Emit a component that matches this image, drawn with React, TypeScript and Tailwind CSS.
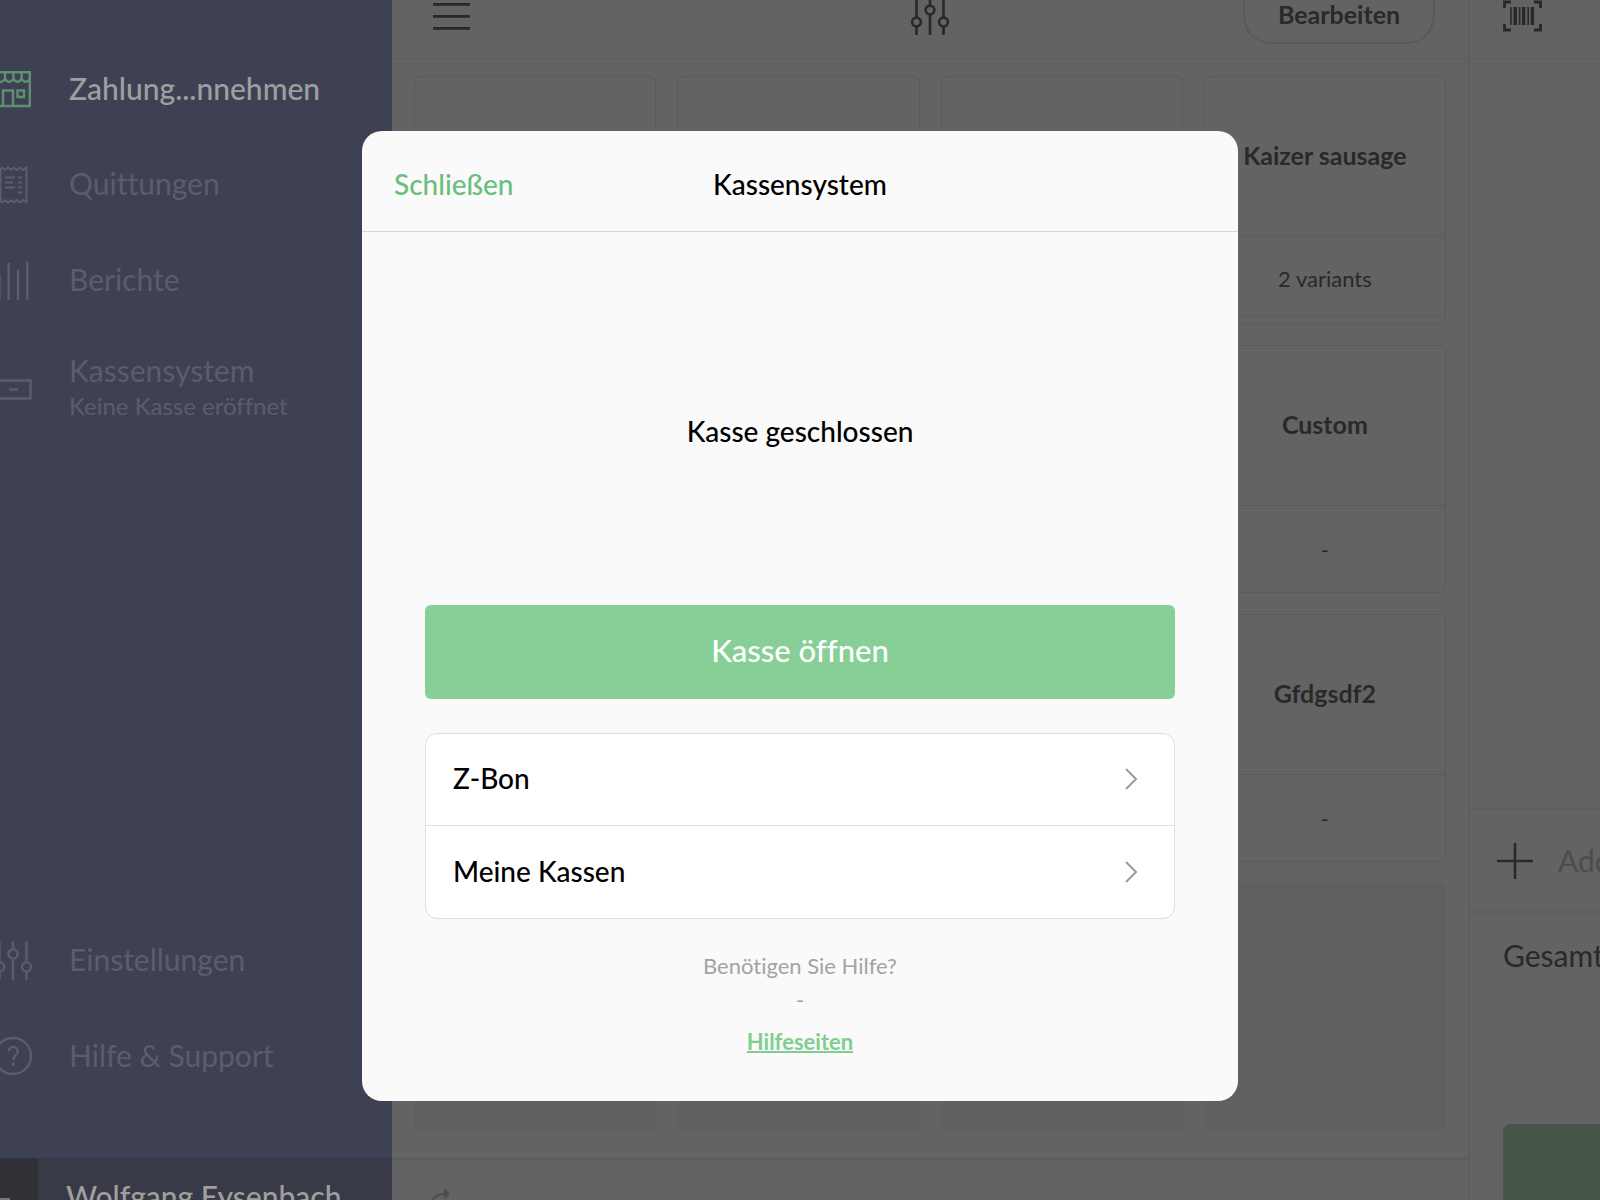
import type { ReactNode } from "react";

type NavItem = {
  label: string;
  hint?: string;
  icon: ReactNode;
  active?: boolean;
};

type Product = {
  name: string;
  detail: string;
  stacked?: boolean;
};

function NavIcon({ children }: { children: ReactNode }) {
  return (
    <svg
      className="h-10 w-[33px] shrink-0"
      viewBox="0 -1 33 40"
      fill="none"
      stroke="currentColor"
      strokeWidth="2.4"
      aria-hidden="true"
    >
      {children}
    </svg>
  );
}

function StoreIcon() {
  return (
    <NavIcon>
      <path d="M-5 3.2H29.8V37H-5Z" />
      <path d="M-3 3V10Q1 16 5 10V3M5 10Q9 16 13.4 10V3M13.4 10Q17.5 16 21.6 10V3M21.6 10Q25.7 16 29.8 10" />
      <path d="M3 37V21.5H13V37" />
      <path d="M17.5 21.5H24V28H17.5Z" />
    </NavIcon>
  );
}

function ReceiptIcon() {
  return (
    <NavIcon>
      <path
        d="M.5 4L2 2.5L5 5L8 2.5L11 5L14 2.5L17 5L20 2.5L23 5L26.5 2.5V37L23 35L20 37.5L17 35L14 37.5L11 35L8 37.5L5 35L2 37.5L.5 36Z"
        strokeWidth="2"
      />
      <path d="M5 12.5H15M5 17.5H13M5 22.5H15M18 12.5H22M18 17.5H22M18 22.5H22M18 27.5H22" strokeWidth="2" />
    </NavIcon>
  );
}

function ReportIcon() {
  return (
    <NavIcon>
      <path d="M-.5 13V39M8.7 2V39M18 9V39M27.3 1V39" />
    </NavIcon>
  );
}

function DrawerIcon() {
  return (
    <NavIcon>
      <path d="M-5 10.5H30.5V28.5H-5Z" />
      <path d="M9 19.5H18" />
    </NavIcon>
  );
}

function SlidersIcon() {
  return (
    <NavIcon>
      <path d="M-.5 0V21M-.5 31V39M13 0V8M13 18V39M26.5 0V21M26.5 31V39" />
      <circle cx="-.5" cy="26" r="4.6" />
      <circle cx="13" cy="13" r="4.6" />
      <circle cx="26.5" cy="26" r="4.6" />
    </NavIcon>
  );
}

function HelpIcon() {
  return (
    <NavIcon>
      <circle cx="13" cy="19" r="18" />
      <path d="M8.5 14.5C8.5 8.5 17.8 8.5 17.8 14.5C17.8 18.5 13.3 18 13.3 23" />
      <circle cx="13.3" cy="27" r="1.8" fill="currentColor" stroke="none" />
    </NavIcon>
  );
}

const mainNav: NavItem[] = [
  { label: "Zahlung...nnehmen", icon: <StoreIcon />, active: true },
  { label: "Quittungen", icon: <ReceiptIcon /> },
  { label: "Berichte", icon: <ReportIcon /> },
  { label: "Kassensystem", hint: "Keine Kasse eröffnet", icon: <DrawerIcon /> },
];

const footerNav: NavItem[] = [
  { label: "Einstellungen", icon: <SlidersIcon /> },
  { label: "Hilfe & Support", icon: <HelpIcon /> },
];

const products: (Product | null)[] = [
  { name: "", detail: "" },
  { name: "", detail: "" },
  { name: "", detail: "" },
  { name: "Kaizer sausage", detail: "2 variants", stacked: true },
  { name: "", detail: "" },
  { name: "", detail: "" },
  { name: "", detail: "" },
  { name: "Custom", detail: "-" },
  { name: "", detail: "" },
  { name: "", detail: "" },
  { name: "", detail: "" },
  { name: "Gfdgsdf2", detail: "-" },
  null,
  null,
  null,
  null,
];

function NavLink({ item }: { item: NavItem }) {
  return (
    <a
      href="#"
      className={
        item.hint
          ? "flex h-24 items-center gap-9 pt-[26px] text-[#5a5d6c]"
          : "flex h-24 items-center gap-9 text-[#5a5d6c]"
      }
    >
      <span className={item.active ? "text-[#5f9070]" : ""}>{item.icon}</span>
      <span
        className={item.active ? "text-[30px] leading-9 font-medium text-[#a09f9e]" : "pb-[2px] text-[30px] leading-9"}
      >
        <span className="block">{item.label}</span>
        {item.hint && <span className="block text-2xl leading-9">{item.hint}</span>}
      </span>
    </a>
  );
}

function Sidebar() {
  return (
    <aside className="flex w-[392px] shrink-0 flex-col bg-[#3e4154]">
      <nav className="flex flex-1 flex-col justify-between pt-10 pb-[54px]">
        <div>
          {mainNav.map((item) => (
            <NavLink key={item.label} item={item} />
          ))}
        </div>
        <div>
          {footerNav.map((item) => (
            <NavLink key={item.label} item={item} />
          ))}
        </div>
      </nav>
      <div className="flex h-[42px] bg-[#393a48]">
        <div className="flex w-[38px] items-end bg-[#323138]">
          <div className="h-[2px] w-[10px] bg-[#77767a]" />
        </div>
        <div className="h-[42px] overflow-hidden pt-5 pl-7 text-[30px] leading-9 font-medium text-[#a09f9e]">
          Wolfgang Eysenbach
        </div>
      </div>
    </aside>
  );
}

function ProductCard({ product }: { product: Product | null }) {
  if (!product) {
    return <div className="h-[248px] rounded-md bg-[#606060]" />;
  }
  return (
    <div className="flex h-[248px] flex-col rounded-md border border-[#5a5a5a] text-[#292929]">
      <div className="flex h-40 items-center justify-center border-b border-[#5a5a5a] pb-[2px] text-[25px] font-bold whitespace-nowrap">
        {product.name}
      </div>
      <div
        className={
          product.stacked
            ? "mb-[6px] flex flex-1 items-center justify-center rounded-b-md border-b border-[#5b5b5b] pt-1 text-[22px]"
            : "flex flex-1 items-center justify-center text-[22px]"
        }
      >
        {product.detail}
      </div>
    </div>
  );
}

function Catalogue() {
  return (
    <main className="flex min-w-0 flex-1 flex-col">
      <header className="flex h-[60px] items-start justify-between border-b-2 border-[#5f5f5f] px-[33px] text-[#292929]">
        <div className="flex-1">
          <button type="button" aria-label="Menu" className="pl-[7px]">
            <svg className="h-9 w-10" viewBox="0 0 40 36" stroke="currentColor" strokeWidth="2.6">
              <path d="M1 4.4H38M1 16.4H38M1 28.4H38" />
            </svg>
          </button>
        </div>
        <button type="button" aria-label="Filter">
          <svg className="h-9 w-10" viewBox="0 0 40 36" fill="none" stroke="currentColor" strokeWidth="2.6">
            <path d="M6.5 0V17.5M6.5 26.5V35M20 0V5.5M20 14.5V35M33.5 0V17.5M33.5 26.5V35" />
            <circle cx="6.5" cy="22" r="4.4" />
            <circle cx="20" cy="10" r="4.4" />
            <circle cx="33.5" cy="22" r="4.4" />
          </svg>
        </button>
        <div className="flex flex-1 justify-end">
          <button
            type="button"
            className="h-11 w-48 rounded-b-[28px] border-2 border-t-0 border-[#5a5a5a] pb-4 text-[25px] leading-7 font-bold"
          >
            Bearbeiten
          </button>
        </div>
      </header>
      <div className="grid flex-1 grid-cols-4 content-start gap-[21px] px-[22px] pt-4">
        {products.map((product, i) => (
          <ProductCard key={i} product={product} />
        ))}
      </div>
      <footer className="flex h-[42px] items-end border-t-2 border-[#5c5c5c] pl-10">
        <svg className="h-3 w-6" viewBox="0 0 24 12" fill="none" stroke="#4c4c4c" strokeWidth="2">
          <path d="M1 12C3 7 8 6 14 6" />
          <path d="M12 0L18 5.5L12 11Z" fill="#4c4c4c" stroke="none" />
        </svg>
      </footer>
    </main>
  );
}

function Cart() {
  return (
    <section className="flex w-[132px] shrink-0 flex-col overflow-hidden border-l-2 border-[#5e5e5e] text-[#292929]">
      <header className="h-[60px] border-b-2 border-[#5f5f5f] pl-[33px]">
        <button type="button" aria-label="Barcode">
          <svg className="h-8 w-10" viewBox="0 0 40 32" fill="none" stroke="currentColor">
            <path d="M1.5 8V2H8M31 2H37.5V8M1.5 24V30H8M31 30H37.5V24" strokeWidth="2.8" />
            <path d="M8 7V25M16.6 7V25M25.2 7V25" strokeWidth="1.6" />
            <path d="M12.2 7V25M20.6 7V25M29.4 7V25" strokeWidth="3.4" />
          </svg>
        </button>
      </header>
      <div className="flex-1" />
      <button
        type="button"
        className="flex h-[105px] items-center gap-6 border-y-2 border-[#5e5e5e] pl-[26px] text-[30px] text-[#4c4c4c]"
      >
        <svg className="h-10 w-[38px] shrink-0" viewBox="0 0 38 40" stroke="#292929" strokeWidth="2.6">
          <path d="M1 20H37M19 2V38" />
        </svg>
        Add
      </button>
      <div className="h-[211px] pt-[22px] pl-[33px] text-[30px] leading-10">Gesamt</div>
      <button type="button" aria-label="Bezahlen" className="ml-[33px] h-[76px] rounded-tl-lg bg-[#475648]" />
    </section>
  );
}

function ListRow({ label }: { label: string }) {
  return (
    <button type="button" className="flex h-[92px] w-full items-center justify-between pr-[35px] pb-[2px] pl-[27px]">
      {label}
      <svg className="h-6 w-4" viewBox="0 0 16 24" fill="none" stroke="#9c9c9c" strokeWidth="2">
        <path d="M3 3L13 13L3 23" />
      </svg>
    </button>
  );
}

function RegisterDialog() {
  return (
    <div
      role="dialog"
      aria-labelledby="register-title"
      className="flex w-[876px] flex-col rounded-[20px] bg-[#fafafa] text-[28px] font-medium text-black"
    >
      <header className="grid h-[101px] grid-cols-3 items-center border-b border-[#d5d5d5] px-8 pt-[6px]">
        <button type="button" className="text-left text-[#6abf7e]">
          Schließen
        </button>
        <h1 id="register-title" className="text-center">
          Kassensystem
        </h1>
      </header>
      <div className="px-[63px] pb-[42px]">
        <p className="flex h-[373px] items-center justify-center pt-[26px]">Kasse geschlossen</p>
        <button type="button" className="h-[94px] w-full rounded-md bg-[#87cf96] pb-[2px] text-[31px] text-white">
          Kasse öffnen
        </button>
        <div className="mt-[34px] divide-y divide-[#dedede] rounded-xl border border-[#dedede] bg-white">
          <ListRow label="Z-Bon" />
          <ListRow label="Meine Kassen" />
        </div>
        <div className="flex flex-col items-center pt-[30px] text-[22px] leading-[34px] font-normal text-[#a3a3a3]">
          <p>Benötigen Sie Hilfe?</p>
          <p>-</p>
          <a href="#" className="mt-2 font-bold text-[#80ce91] underline decoration-2">
            Hilfeseiten
          </a>
        </div>
      </div>
    </div>
  );
}

export default function App() {
  return (
    <div className="relative h-screen overflow-hidden bg-[#636363] font-['Lato',sans-serif] [font-variant-ligatures:none]">
      <div className="flex h-full">
        <Sidebar />
        <Catalogue />
        <Cart />
      </div>
      <div className="absolute inset-0 flex items-center justify-center pt-[31px]">
        <RegisterDialog />
      </div>
    </div>
  );
}
